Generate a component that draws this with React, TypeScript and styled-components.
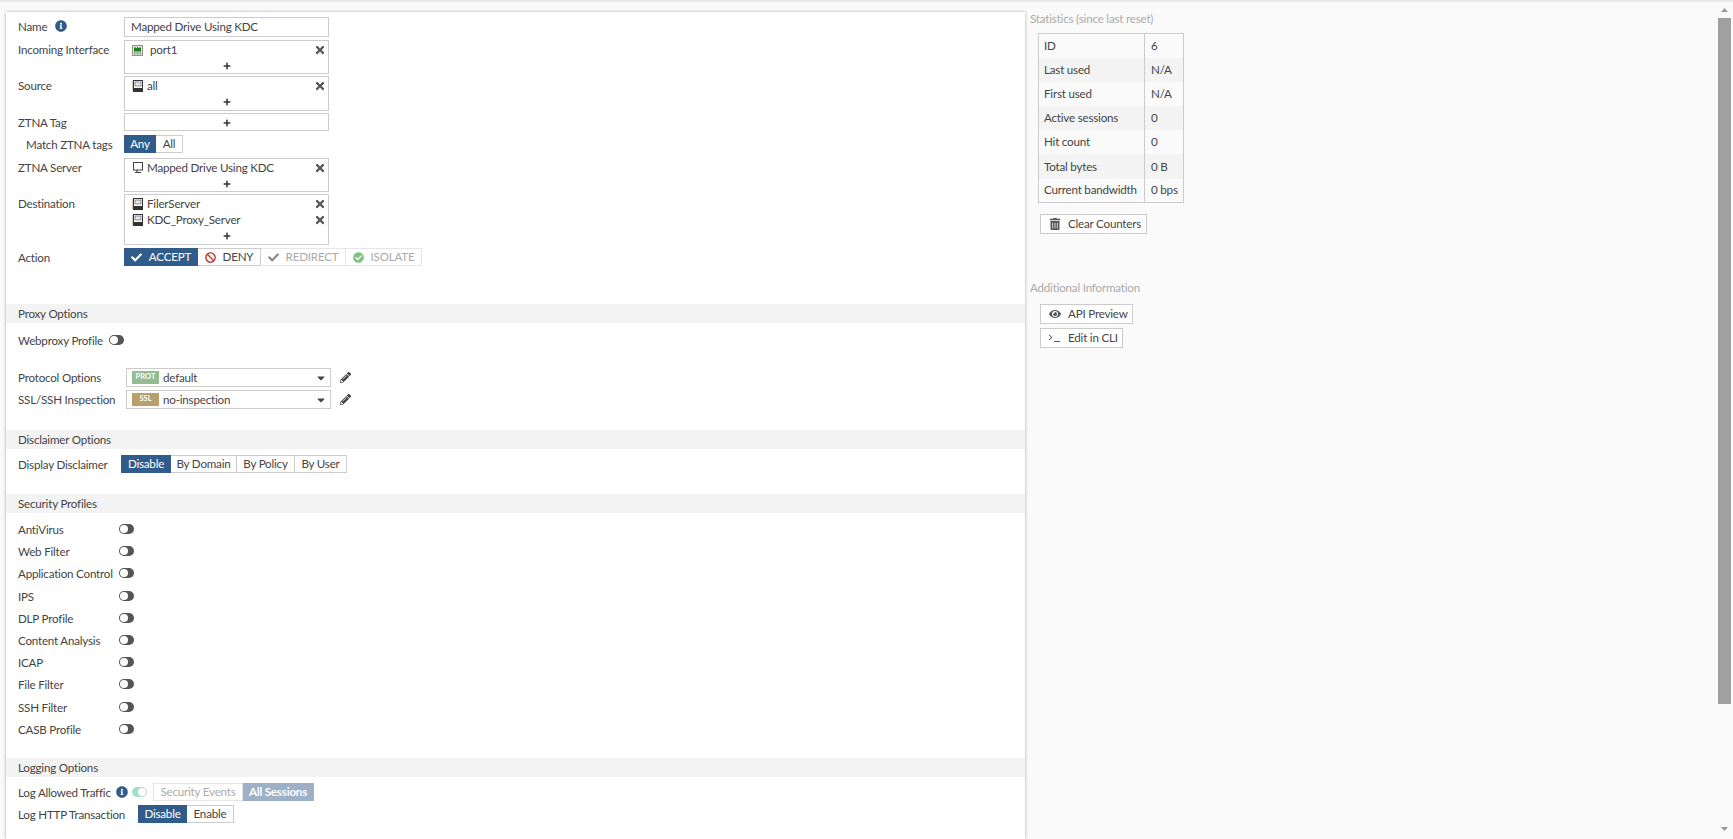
import styled, { createGlobalStyle } from 'styled-components';
import { FaBan, FaCaretDown, FaCheck, FaCheckCircle, FaEye, FaInfoCircle, FaPencilAlt, FaPlus, FaTimes, FaTrashAlt } from 'react-icons/fa';

const GlobalStyle = createGlobalStyle`
    html, body {
        margin: 0;
        padding: 0;
        height: 100%;
        overflow: hidden;
        background: #fafafa;
    }
    body {
        font-family: Lato, "Open Sans", sans-serif;
        font-size: 11.6px;
        letter-spacing: -0.2px;
        color: #444;
    }
`;

const Page = styled.div`
    display: flex;
    height: 837px;
    border-top: 2px solid #e8e8e8;
    background: #fafafa;
    overflow: hidden;
`;
const Panel = styled.div`
    width: 1019px;
    margin: 10px 0 0 6px;
    padding-top: 5px;
    background: #fff;
    box-shadow: 0 0 3px rgba(0, 0, 0, 0.35);
    flex-shrink: 0;
`;
const Fields = styled.div`
    display: flex;
    flex-direction: column;
    gap: 2px;
`;
const Row = styled.div<{ $top?: number }>`
    display: flex;
    align-items: flex-start;
    padding-left: 12px;
    margin-top: ${(p) => p.$top ?? 0}px;
`;
const Label = styled.div<{ $w?: number; $indent?: number }>`
    width: ${(p) => p.$w ?? 106}px;
    height: 18px;
    padding-left: ${(p) => p.$indent ?? 0}px;
    box-sizing: border-box;
    line-height: 19px;
    white-space: nowrap;
    flex-shrink: 0;
    display: flex;
    align-items: flex-start;
`;
const InfoIcon = styled(FaInfoCircle)<{ $left: number }>`
    color: #2f5c8a;
    font-size: 12px;
    margin-left: ${(p) => p.$left}px;
    align-self: center;
`;
const TextBox = styled.div`
    width: 205px;
    height: 20px;
    box-sizing: border-box;
    border: 1px solid #ccc;
    padding-left: 6px;
    line-height: 18px;
`;
const ListBox = styled.div<{ $h: number }>`
    width: 205px;
    height: ${(p) => p.$h}px;
    box-sizing: border-box;
    border: 1px solid #ccc;
    padding-top: 1px;
    display: flex;
    flex-direction: column;
`;
const ListItem = styled.div`
    display: flex;
    align-items: center;
    height: 16px;
    padding: 0 2px 0 7px;
    line-height: 16px;
`;
const ItemName = styled.span<{ $gap: number }>`
    flex: 1;
    margin-left: ${(p) => p.$gap}px;
`;
const RemoveIcon = styled(FaTimes)`
    color: #555;
    font-size: 12px;
    margin-top: -1px;
`;
const AddLine = styled.div`
    flex: 1;
    display: flex;
    align-items: center;
    justify-content: center;
    color: #333;
    font-size: 8px;
    min-height: 14px;
`;
const Segments = styled.div<{ $left?: number }>`
    display: flex;
    margin-left: ${(p) => p.$left ?? 0}px;
`;
const Segment = styled.div<{ $on?: boolean; $off?: boolean; $soft?: boolean; $w: number }>`
    width: ${(p) => p.$w}px;
    height: 18px;
    box-sizing: border-box;
    display: flex;
    align-items: center;
    justify-content: center;
    gap: 7px;
    line-height: 16px;
    white-space: nowrap;
    border: 1px solid ${(p) => (p.$on ? '#2f5c8a' : p.$soft ? '#9db0c8' : p.$off ? '#e6e6e6' : '#ccc')};
    background: ${(p) => (p.$on ? '#2f5c8a' : p.$soft ? '#9db0c8' : '#fff')};
    color: ${(p) => (p.$on || p.$soft ? '#fff' : p.$off ? '#aaa' : '#444')};
    font-weight: ${(p) => (p.$soft ? 700 : 400)};
    & + & {
        border-left: none;
    }
`;
const SectionHeader = styled.div<{ $top: number }>`
    margin-top: ${(p) => p.$top}px;
    height: 19px;
    line-height: 19px;
    padding-left: 12px;
    background: #f3f3f3;
`;
const Toggle = styled.div<{ $on?: boolean }>`
    width: 15px;
    height: 10px;
    margin-top: 4px;
    border-radius: 5px;
    background: ${(p) => (p.$on ? '#a5dccb' : '#555')};
    position: relative;
    flex-shrink: 0;
    &::after {
        content: '';
        position: absolute;
        top: 1px;
        ${(p) => (p.$on ? 'right: 1px;' : 'left: 1px;')}
        width: 8px;
        height: 8px;
        border-radius: 50%;
        background: #fff;
    }
`;
const SelectBox = styled.div`
    width: 205px;
    height: 19px;
    box-sizing: border-box;
    border: 1px solid #ccc;
    padding: 0 3px 0 5px;
    display: flex;
    align-items: center;
`;
const Badge = styled.span<{ $color: string }>`
    width: 27px;
    height: 13px;
    background: ${(p) => p.$color};
    color: #fff;
    font-size: 7.5px;
    font-weight: 700;
    letter-spacing: 0;
    line-height: 12px;
    text-align: center;
    margin-right: 4px;
`;
const SelectText = styled.span`
    flex: 1;
    line-height: 17px;
`;
const Caret = styled(FaCaretDown)`
    color: #444;
    font-size: 12px;
`;
const EditIcon = styled(FaPencilAlt)`
    color: #444;
    font-size: 11px;
    margin: 4px 0 0 9px;
`;
const ToggleList = styled.div`
    display: flex;
    flex-direction: column;
    gap: 4.2px;
    margin-top: 7px;
`;
const Side = styled.div`
    width: 693px;
    padding: 9px 0 0 5px;
    box-sizing: border-box;
    flex-shrink: 0;
`;
const SideTitle = styled.div<{ $top?: number; $bottom?: number }>`
    color: #aaa;
    line-height: 16px;
    margin-top: ${(p) => p.$top ?? 0}px;
    margin-bottom: ${(p) => p.$bottom ?? 0}px;
`;
const StatsTable = styled.table`
    border-collapse: collapse;
    border: 1px solid #ccc;
    margin: 6px 0 11px 8px;
    width: 146px;
    table-layout: fixed;
    line-height: 16px;
`;
const StatsRow = styled.tr<{ $shade: boolean }>`
    height: 24.2px;
    background: ${(p) => (p.$shade ? '#f4f4f4' : 'transparent')};
`;
const StatsName = styled.td`
    width: 100px;
    padding: 0 0 0 5px;
    border-right: 1px solid #ccc;
    white-space: nowrap;
`;
const StatsValue = styled.td`
    padding: 0 0 0 6px;
    white-space: nowrap;
`;
const SideButton = styled.div<{ $w: number }>`
    width: ${(p) => p.$w}px;
    height: 20px;
    box-sizing: border-box;
    border: 1px solid #ccc;
    background: #fff;
    margin: 0 0 4px 10px;
    padding-left: 7px;
    display: flex;
    align-items: center;
    gap: 7px;
    line-height: 18px;
    white-space: nowrap;
`;
const SideIcon = styled.span`
    width: 13px;
    display: flex;
    justify-content: center;
    color: #555;
    font-size: 12px;
`;
const ScrollRail = styled.div`
    width: 13px;
    display: flex;
    flex-direction: column;
    align-items: center;
    padding-top: 6px;
`;
const ScrollThumb = styled.div`
    width: 13px;
    height: 686px;
    background: #a0a0a0;
    margin: 6px 0 123px;
`;

const fieldIconColor = '#444';

function AddressIcon() {
    return (
        <svg width="11" height="12" viewBox="0 0 11 12">
            <rect x="1.5" y="0.5" width="9" height="11" fill="#fff" stroke="#333" />
            <rect x="3" y="2" width="6" height="4" fill="#dfe6ee" stroke="#555" strokeWidth="0.6" />
            <rect x="2" y="8" width="8" height="3" fill="#333" />
            <path d="M0 2h1M0 4h1M0 6h1M0 8h1M0 10h1" stroke="#b58a50" />
        </svg>
    );
}

function PortIcon() {
    return (
        <svg width="11" height="11" viewBox="0 0 11 11">
            <rect x="0.5" y="0.5" width="10" height="10" fill="#dde3d8" stroke="#8a9a80" />
            <rect x="2" y="3" width="7" height="3.5" fill="#1d7f1d" />
            <path d="M3 2v1M5.5 2v1M8 2v1" stroke="#1d7f1d" />
            <path d="M2.5 7v2.5M4 7v2.5M5.5 7v2.5M7 7v2.5M8.5 7v2.5" stroke="#999" />
        </svg>
    );
}

function ServerIcon() {
    return (
        <svg width="12" height="12" viewBox="0 0 12 12">
            <rect x="1.5" y="0.5" width="9" height="7.5" fill="#fff" stroke={fieldIconColor} />
            <path d="M5 8v2M3 10.5h6" stroke={fieldIconColor} strokeWidth="1.2" />
        </svg>
    );
}

function PromptIcon() {
    return (
        <svg width="13" height="10" viewBox="0 0 13 10">
            <path d="M1 2l3 2.5L1 7M6 8.5h6" fill="none" stroke="#555" strokeWidth="1" />
        </svg>
    );
}

function ScrollArrow({ down }: { down?: boolean }) {
    return (
        <svg width="7" height="4" viewBox="0 0 7 4">
            <polygon points={down ? '0,0 7,0 3.5,4' : '3.5,0 7,4 0,4'} fill="#999" />
        </svg>
    );
}

const profiles = ['AntiVirus', 'Web Filter', 'Application Control', 'IPS', 'DLP Profile', 'Content Analysis', 'ICAP', 'File Filter', 'SSH Filter', 'CASB Profile'];

const stats = [
    ['ID', '6'],
    ['Last used', 'N/A'],
    ['First used', 'N/A'],
    ['Active sessions', '0'],
    ['Hit count', '0'],
    ['Total bytes', '0 B'],
    ['Current bandwidth', '0 bps'],
];

function App() {
    return (
        <>
            <GlobalStyle />
            <Page>
                <Panel>
                    <Fields>
                        <Row>
                            <Label>
                                Name
                                <InfoIcon $left={8} />
                            </Label>
                            <TextBox>Mapped Drive Using KDC</TextBox>
                        </Row>
                        <Row $top={1}>
                            <Label>Incoming Interface</Label>
                            <ListBox $h={34}>
                                <ListItem>
                                    <PortIcon />
                                    <ItemName $gap={7}>port1</ItemName>
                                    <RemoveIcon />
                                </ListItem>
                                <AddLine><FaPlus /></AddLine>
                            </ListBox>
                        </Row>
                        <Row>
                            <Label>Source</Label>
                            <ListBox $h={35}>
                                <ListItem>
                                    <AddressIcon />
                                    <ItemName $gap={4}>all</ItemName>
                                    <RemoveIcon />
                                </ListItem>
                                <AddLine><FaPlus /></AddLine>
                            </ListBox>
                        </Row>
                        <Row>
                            <Label>ZTNA Tag</Label>
                            <ListBox $h={18}>
                                <AddLine><FaPlus /></AddLine>
                            </ListBox>
                        </Row>
                        <Row $top={2}>
                            <Label $indent={8}>Match ZTNA tags</Label>
                            <Segments>
                                <Segment $on $w={32}>Any</Segment>
                                <Segment $w={27}>All</Segment>
                            </Segments>
                        </Row>
                        <Row $top={3}>
                            <Label>ZTNA Server</Label>
                            <ListBox $h={34}>
                                <ListItem>
                                    <ServerIcon />
                                    <ItemName $gap={3}>Mapped Drive Using KDC</ItemName>
                                    <RemoveIcon />
                                </ListItem>
                                <AddLine><FaPlus /></AddLine>
                            </ListBox>
                        </Row>
                        <Row>
                            <Label>Destination</Label>
                            <ListBox $h={51}>
                                <ListItem>
                                    <AddressIcon />
                                    <ItemName $gap={4}>FilerServer</ItemName>
                                    <RemoveIcon />
                                </ListItem>
                                <ListItem>
                                    <AddressIcon />
                                    <ItemName $gap={4}>KDC_Proxy_Server</ItemName>
                                    <RemoveIcon />
                                </ListItem>
                                <AddLine><FaPlus /></AddLine>
                            </ListBox>
                        </Row>
                        <Row $top={1}>
                            <Label>Action</Label>
                            <Segments>
                                <Segment $on $w={74}><FaCheck size={11} />ACCEPT</Segment>
                                <Segment $w={63}><FaBan size={11} color="#c0392b" />DENY</Segment>
                                <Segment $off $w={85}><FaCheck size={11} color="#888" />REDIRECT</Segment>
                                <Segment $off $w={76}><FaCheckCircle size={11} color="#7fc382" />ISOLATE</Segment>
                            </Segments>
                        </Row>
                    </Fields>

                    <SectionHeader $top={38}>Proxy Options</SectionHeader>
                    <Row $top={8}>
                        <Label $w={91}>Webproxy Profile</Label>
                        <Toggle />
                    </Row>
                    <Row $top={19}>
                        <Label $w={108}>Protocol Options</Label>
                        <SelectBox>
                            <Badge $color="#93bd8f">PROT</Badge>
                            <SelectText>default</SelectText>
                            <Caret />
                        </SelectBox>
                        <EditIcon />
                    </Row>
                    <Row $top={3}>
                        <Label $w={108}>SSL/SSH Inspection</Label>
                        <SelectBox>
                            <Badge $color="#b99f6c">SSL</Badge>
                            <SelectText>no-inspection</SelectText>
                            <Caret />
                        </SelectBox>
                        <EditIcon />
                    </Row>

                    <SectionHeader $top={21}>Disclaimer Options</SectionHeader>
                    <Row $top={6}>
                        <Label $w={103}>Display Disclaimer</Label>
                        <Segments>
                            <Segment $on $w={50}>Disable</Segment>
                            <Segment $w={66}>By Domain</Segment>
                            <Segment $w={58}>By Policy</Segment>
                            <Segment $w={52}>By User</Segment>
                        </Segments>
                    </Row>

                    <SectionHeader $top={21}>Security Profiles</SectionHeader>
                    <ToggleList>
                        {profiles.map((name) => (
                            <Row key={name}>
                                <Label $w={101}>{name}</Label>
                                <Toggle />
                            </Row>
                        ))}
                    </ToggleList>

                    <SectionHeader $top={20}>Logging Options</SectionHeader>
                    <Row $top={6}>
                        <Label $w={114}>
                            Log Allowed Traffic
                            <InfoIcon $left={5} />
                        </Label>
                        <Toggle $on />
                        <Segments $left={6}>
                            <Segment $off $w={90}>Security Events</Segment>
                            <Segment $soft $w={71}>All Sessions</Segment>
                        </Segments>
                    </Row>
                    <Row $top={4}>
                        <Label $w={120}>Log HTTP Transaction</Label>
                        <Segments>
                            <Segment $on $w={49}>Disable</Segment>
                            <Segment $w={47}>Enable</Segment>
                        </Segments>
                    </Row>
                </Panel>

                <Side>
                    <SideTitle>Statistics (since last reset)</SideTitle>
                    <StatsTable>
                        <tbody>
                            {stats.map(([name, value], i) => (
                                <StatsRow key={name} $shade={i % 2 === 1}>
                                    <StatsName>{name}</StatsName>
                                    <StatsValue>{value}</StatsValue>
                                </StatsRow>
                            ))}
                        </tbody>
                    </StatsTable>
                    <SideButton $w={107}>
                        <SideIcon><FaTrashAlt /></SideIcon>
                        Clear Counters
                    </SideButton>
                    <SideTitle $top={46} $bottom={8}>Additional Information</SideTitle>
                    <SideButton $w={93}>
                        <SideIcon><FaEye /></SideIcon>
                        API Preview
                    </SideButton>
                    <SideButton $w={83}>
                        <SideIcon><PromptIcon /></SideIcon>
                        Edit in CLI
                    </SideButton>
                </Side>

                <ScrollRail>
                    <ScrollArrow />
                    <ScrollThumb />
                    <ScrollArrow down />
                </ScrollRail>
            </Page>
        </>
    );
}

export default App;
